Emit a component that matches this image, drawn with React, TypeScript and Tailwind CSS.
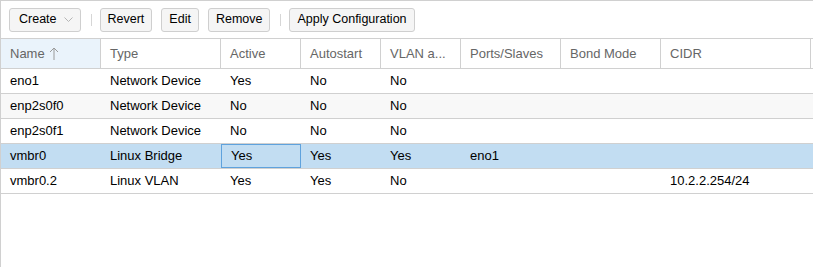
import React from 'react';

const columns = [
  { key: 'name', label: 'Name', w: 'w-[100px]' },
  { key: 'type', label: 'Type', w: 'w-[120px]' },
  { key: 'active', label: 'Active', w: 'w-[80px]' },
  { key: 'autostart', label: 'Autostart', w: 'w-[80px]' },
  { key: 'vlan', label: 'VLAN a...', w: 'w-[80px]' },
  { key: 'ports', label: 'Ports/Slaves', w: 'w-[100px]' },
  { key: 'bond', label: 'Bond Mode', w: 'w-[100px]' },
  { key: 'cidr', label: 'CIDR', w: 'w-[150px]' },
];

const rows = [
  { name: 'eno1', type: 'Network Device', active: 'Yes', autostart: 'No', vlan: 'No', ports: '', bond: '', cidr: '' },
  { name: 'enp2s0f0', type: 'Network Device', active: 'No', autostart: 'No', vlan: 'No', ports: '', bond: '', cidr: '' },
  { name: 'enp2s0f1', type: 'Network Device', active: 'No', autostart: 'No', vlan: 'No', ports: '', bond: '', cidr: '' },
  { name: 'vmbr0', type: 'Linux Bridge', active: 'Yes', autostart: 'Yes', vlan: 'Yes', ports: 'eno1', bond: '', cidr: '' },
  { name: 'vmbr0.2', type: 'Linux VLAN', active: 'Yes', autostart: 'Yes', vlan: 'No', ports: '', bond: '', cidr: '10.2.2.254/24' },
];

function Btn({ children }: { children: React.ReactNode }) {
  return (
    <button className="h-[24px] px-[7px] flex items-center gap-[7px] bg-[#f5f5f5] border border-[#cfcfcf] rounded-[3px] text-[12.5px] text-[#000]">
      {children}
    </button>
  );
}

function Sep() {
  return <div className="w-px h-[12px] bg-[#d6d6d6] ml-[1px] mr-[-1px]" />;
}

export default function App() {
  return (
    <div
      className="w-[813px] h-[267px] bg-white border-t border-l border-[#d0d0d0] overflow-hidden"
      style={{ fontFamily: '"Liberation Sans", Arial, sans-serif' }}
    >
      {/* toolbar */}
      <div className="h-[37px] flex items-center pl-[8px] gap-[9px]">
        <Btn>
          <span className="pl-[2px]">Create</span>
          <svg width="9" height="6" viewBox="0 0 9 6" className="mt-px">
            <path d="M0.5 0.5 L4.5 4.5 L8.5 0.5" fill="none" stroke="#b5b5b5" strokeWidth="1" />
          </svg>
        </Btn>
        <Sep />
        <Btn>Revert</Btn>
        <Btn>Edit</Btn>
        <Btn>Remove</Btn>
        <Sep />
        <Btn>Apply Configuration</Btn>
      </div>

      {/* header */}
      <div className="flex h-[31px] border-t border-b border-[#d0d0d0]">
        {columns.map((c, i) => (
          <div
            key={c.key}
            className={`${c.w} shrink-0 flex items-center pl-[9px] text-[13px] text-[#666] border-r border-[#d0d0d0] ${
              i === 0 ? 'bg-[#eaf3fb]' : ''
            }`}
          >
            {c.label}
            {i === 0 && (
              <svg width="10" height="14" viewBox="0 0 10 14" className="ml-[4px]">
                <path d="M5 1 V13 M1 5 L5 1 L9 5" fill="none" stroke="#9a9a9a" strokeWidth="1" />
              </svg>
            )}
          </div>
        ))}
        <div className="flex-1" />
      </div>

      {/* rows */}
      {rows.map((r, ri) => {
        const selected = ri === 3;
        const bg = selected ? 'bg-[#c2ddf2]' : ri % 2 === 1 ? 'bg-[#f8f8f8]' : 'bg-white';
        return (
          <div key={r.name} className={`flex h-[25px] border-b border-[#d0d0d0] ${bg}`}>
            {columns.map((c) => (
              <div
                key={c.key}
                className={`${c.w} shrink-0 flex items-center pl-[9px] text-[13px] text-[#000] ${
                  selected && c.key === 'active' ? 'border border-[#5fa2dd] pl-[8px]' : ''
                }`}
              >
                {(r as Record<string, string>)[c.key]}
              </div>
            ))}
            <div className="flex-1" />
          </div>
        );
      })}
    </div>
  );
}
